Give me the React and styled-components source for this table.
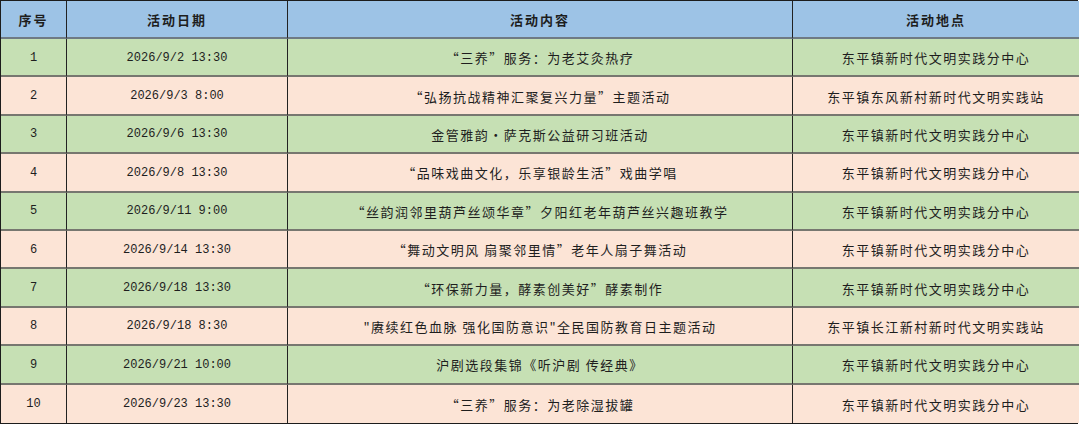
import React from 'react';
import styled, { createGlobalStyle } from 'styled-components';

const GlobalStyle = createGlobalStyle`
  html, body {
    margin: 0;
    padding: 0;
    background: #ffffff;
  }
`;

const rows = [
  ['1', '2026/9/2 13:30', '“三养”服务：为老艾灸热疗', '东平镇新时代文明实践分中心'],
  ['2', '2026/9/3 8:00', '“弘扬抗战精神汇聚复兴力量”主题活动', '东平镇东风新村新时代文明实践站'],
  ['3', '2026/9/6 13:30', '金管雅韵·萨克斯公益研习班活动', '东平镇新时代文明实践分中心'],
  ['4', '2026/9/8 13:30', '“品味戏曲文化，乐享银龄生活”戏曲学唱', '东平镇新时代文明实践分中心'],
  ['5', '2026/9/11 9:00', '“丝韵润邻里葫芦丝颂华章”夕阳红老年葫芦丝兴趣班教学', '东平镇新时代文明实践分中心'],
  ['6', '2026/9/14 13:30', '“舞动文明风 扇聚邻里情”老年人扇子舞活动', '东平镇新时代文明实践分中心'],
  ['7', '2026/9/18 13:30', '“环保新力量，酵素创美好”酵素制作', '东平镇新时代文明实践分中心'],
  ['8', '2026/9/18 8:30', '"赓续红色血脉 强化国防意识"全民国防教育日主题活动', '东平镇长江新村新时代文明实践站'],
  ['9', '2026/9/21 10:00', '沪剧选段集锦《听沪剧 传经典》', '东平镇新时代文明实践分中心'],
  ['10', '2026/9/23 13:30', '“三养”服务：为老除湿拔罐', '东平镇新时代文明实践分中心'],
];

const headers = ['序号', '活动日期', '活动内容', '活动地点'];

const Sheet = styled.div`
  width: 1078px;
  display: grid;
  grid-template-columns: 66px 221px 505px 286px;
  grid-template-rows: 38px repeat(10, 38.4px);
  border: 1px solid #1c1c1c;
  border-right-width: 2px;
  border-bottom-width: 2px;
  box-sizing: border-box;
  height: 424px;
`;

const Cell = styled.div`
  display: flex;
  align-items: center;
  justify-content: center;
  box-sizing: border-box;
  border-right: 1px solid #222;
  border-bottom: ${(p) => (p.$last ? 'none' : '2px solid #777770')};
  background: ${(p) => p.$bg};
  color: #1e1e1e;
  font-family: 'Noto Sans CJK SC', 'Liberation Serif', sans-serif;
  font-size: 13px;
  letter-spacing: 1.5px;
  white-space: nowrap;
  padding-top: 1px;

  &:nth-child(4n) {
    border-right: none;
  }
`;

const HeadCell = styled(Cell)`
  font-weight: 700;
  letter-spacing: 2px;
  border-bottom: 2px solid #6f7a84;
`;

const NumCell = styled(Cell)`
  font-family: 'Liberation Mono', 'Noto Sans CJK SC', monospace;
  font-size: 12px;
  letter-spacing: 0;
`;

const rowBg = (i) => (i % 2 === 0 ? '#c6e0b4' : '#fce4d6');

export default function App() {
  return (
    <>
      <GlobalStyle />
      <Sheet>
        {headers.map((h) => (
          <HeadCell key={h} $bg="#9dc3e6">
            {h}
          </HeadCell>
        ))}
        {rows.map((r, i) => {
          const last = i === rows.length - 1;
          const bg = rowBg(i);
          return (
            <React.Fragment key={r[0]}>
              <NumCell $bg={bg} $last={last}>{r[0]}</NumCell>
              <NumCell $bg={bg} $last={last}>{r[1]}</NumCell>
              <Cell $bg={bg} $last={last}>{r[2]}</Cell>
              <Cell $bg={bg} $last={last}>{r[3]}</Cell>
            </React.Fragment>
          );
        })}
      </Sheet>
    </>
  );
}
